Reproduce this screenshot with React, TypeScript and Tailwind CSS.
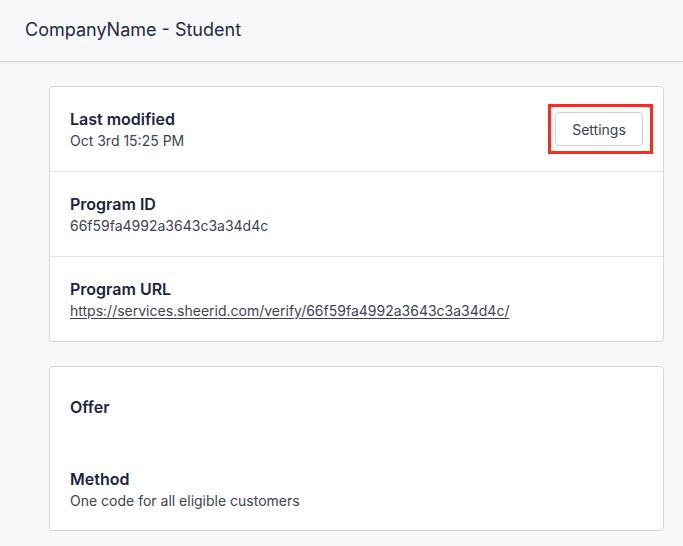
import React from "react";

type Field = { label: string; value?: string; link?: boolean };

function FieldRow({ label, value, link }: Field) {
  return (
    <div className="flex flex-col">
      <p className="text-[16px] leading-5 font-semibold text-[#1c2442]">{label}</p>
      {value &&
        (link ? (
          <a href={value} className="mt-[2px] text-[14px] leading-5 text-[#3e4354] underline underline-offset-2">
            {value}
          </a>
        ) : (
          <p className="mt-[2px] text-[14px] leading-5 text-[#3e4354]">{value}</p>
        ))}
    </div>
  );
}

export default function App() {
  const url = "https://services.sheerid.com/verify/66f59fa4992a3643c3a34d4c/";

  return (
    <div
      className="min-h-[546px] bg-[#f7f8fa] text-[#1c2442]"
      style={{ fontFamily: "Inter, 'Noto Sans', sans-serif" }}
    >
      <header className="h-[62px] flex items-center px-[25px] border-b border-[#d6d9df] shadow-[0_1px_2px_rgba(0,0,0,0.06)]">
        <h1 className="text-[18px] leading-6 text-[#1f2944] -mt-[1px]">CompanyName - Student</h1>
      </header>

      <main className="pl-[49px] pr-[19px] pt-[24px] flex flex-col gap-[24px]">
        <section className="bg-white border border-[#d3d6dc] rounded-[4px]">
          <div className="h-[85px] flex items-center justify-between pl-[20px] pr-[10px] pt-[2px] border-b border-[#e3e5e9]">
            <FieldRow label="Last modified" value="Oct 3rd 15:25 PM" />
            {/* red highlight box around the button */}
            <div className="-mt-[2px] border-[3px] border-[#ff2a1f] pl-[4px] pr-[7px] py-[5px]">
              <button className="h-[34px] w-[88px] rounded-[4px] border border-[#cdd0d7] bg-white text-[14px] text-[#3c4152]">
                Settings
              </button>
            </div>
          </div>
          <div className="px-[20px] pt-[22px] pb-[20px] border-b border-[#e3e5e9]">
            <FieldRow label="Program ID" value="66f59fa4992a3643c3a34d4c" />
          </div>
          <div className="px-[20px] pt-[22px] pb-[20px]">
            <FieldRow label="Program URL" value={url} link />
          </div>
        </section>

        <section className="bg-white border border-[#d3d6dc] rounded-[4px]">
          <div className="px-[20px] py-[30px]">
            <FieldRow label="Offer" />
          </div>
          <div className="px-[20px] pt-[22px] pb-[19px]">
            <FieldRow label="Method" value="One code for all eligible customers" />
          </div>
        </section>
      </main>
    </div>
  );
}
